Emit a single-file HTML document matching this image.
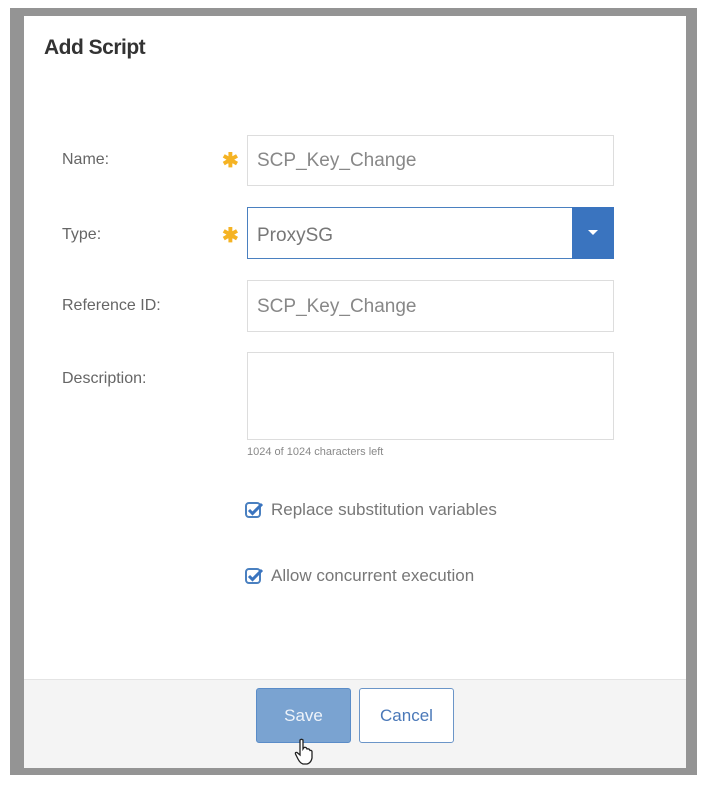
<!DOCTYPE html>
<html><head><style>
body{margin:0;width:706px;height:790px;background:#fff;position:relative;overflow:hidden;font-family:"Liberation Sans",sans-serif;}
.abs{position:absolute}
.outer{left:10px;top:8px;width:687px;height:767px;background:#949494}
.dlg{left:24px;top:16px;width:662px;height:751px;background:#fff}
.foot{left:24px;top:679px;width:662px;height:88px;background:#f4f4f4;border-top:1px solid #e4e4e4}
.lbl{left:62px;font-size:16px;color:#666}
.star{left:222px;color:#f5b323;font-size:20px;font-weight:bold}
.inp{left:247px;width:367px;border:1px solid #ddd;background:#fff;font-size:19px;color:#888;box-sizing:border-box;padding-left:9px}
.ct{left:271px;font-size:17px;color:#777}
.btn{top:688px;height:55px;border-radius:3px;box-sizing:border-box;font-size:17px;text-align:center;line-height:53px}
</style></head><body>
<div class="abs outer"></div>
<div class="abs dlg"></div>
<div class="abs" style="left:44px;top:36px;font-size:21px;color:#333;font-weight:bold;letter-spacing:-0.5px">Add Script</div>
<div class="abs lbl" style="top:151px">Name:</div>
<div class="abs star" style="top:148px">✱</div>
<div class="abs inp" style="top:135px;height:51px;line-height:49px">SCP_Key_Change</div>
<div class="abs lbl" style="top:226px">Type:</div>
<div class="abs star" style="top:223px">✱</div>
<div class="abs inp" style="top:207px;height:52px;line-height:56px;border-color:#4a80c0;color:#777">ProxySG</div>
<div class="abs" style="left:572px;top:207px;width:42px;height:52px;background:#3a74bf"></div>
<div class="abs" style="left:588px;top:230px;width:0;height:0;border-left:5px solid transparent;border-right:5px solid transparent;border-top:5px solid #fff"></div>
<div class="abs lbl" style="top:297px">Reference ID:</div>
<div class="abs inp" style="top:280px;height:52px;line-height:52px">SCP_Key_Change</div>
<div class="abs lbl" style="top:370px">Description:</div>
<div class="abs inp" style="top:352px;height:88px"></div>
<div class="abs" style="left:247px;top:446px;font-size:11px;color:#888">1024 of 1024 characters left</div>
<svg class="abs" style="left:244px;top:500px" width="20" height="20" viewBox="0 0 20 20"><rect x="2" y="3" width="14" height="14" rx="3" fill="none" stroke="#4a80c0" stroke-width="2"/><path d="M5 10 L8.5 13.5 L18 4" fill="none" stroke="#3a74bf" stroke-width="3"/></svg>
<div class="abs ct" style="top:500px">Replace substitution variables</div>
<svg class="abs" style="left:244px;top:566px" width="20" height="20" viewBox="0 0 20 20"><rect x="2" y="3" width="14" height="14" rx="3" fill="none" stroke="#4a80c0" stroke-width="2"/><path d="M5 10 L8.5 13.5 L18 4" fill="none" stroke="#3a74bf" stroke-width="3"/></svg>
<div class="abs ct" style="top:566px">Allow concurrent execution</div>
<div class="abs foot"></div>
<div class="abs btn" style="left:256px;width:95px;background:#7aa3d1;border:1px solid #5a8cc8;color:#eef3fa">Save</div>
<div class="abs btn" style="left:359px;width:95px;background:#fff;border:1px solid #6b95c8;color:#4a78b8">Cancel</div>
<svg class="abs" style="left:294px;top:738px" width="20" height="28" viewBox="0 0 20 28"><path d="M6 2 Q7.5 0.5 9 2 L9 11 L10 9.5 Q11.5 9 12.5 10 L13 11 Q14.5 10.5 15.5 11.5 L16 12.5 Q17.5 12 18 13.5 L18 20 Q17 25 13 26 L9 26 Q6 25 4 21 L1.5 16 Q1 14 3 14.5 L6 17 Z" fill="#fff" stroke="#222" stroke-width="1.3"/></svg>
</body></html>
